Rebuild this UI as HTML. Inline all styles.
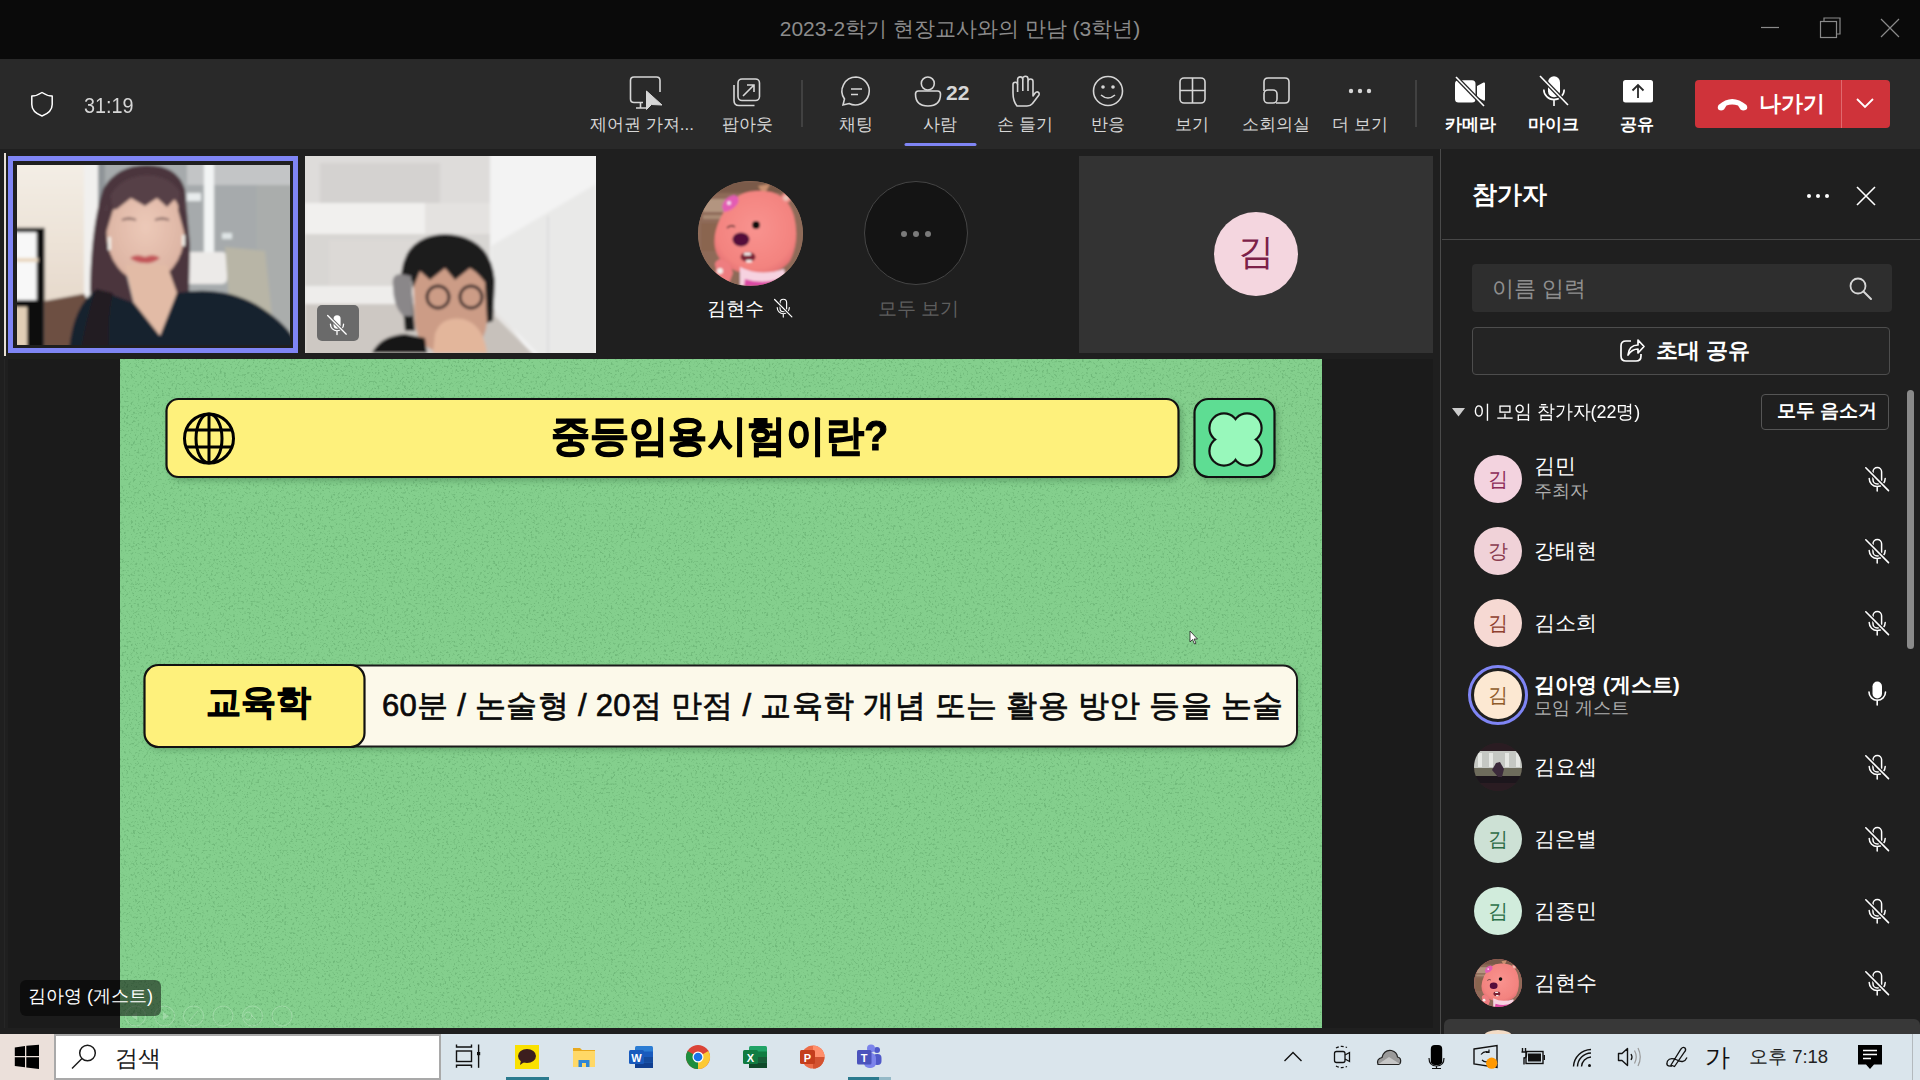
<!DOCTYPE html>
<html><head><meta charset="utf-8">
<style>
*{margin:0;padding:0;box-sizing:border-box}
html,body{width:1920px;height:1080px;overflow:hidden;background:#1f1f1f;font-family:"Liberation Sans",sans-serif;color:#fff}
.a{position:absolute}
svg{position:absolute;overflow:visible}
.lbl{position:absolute;top:114px;font-size:17px;color:#d6d6d6;white-space:nowrap;transform:translateX(-50%);line-height:22px}
.nm{position:absolute;font-size:21px;color:#fff;white-space:nowrap;line-height:26px}
.av{position:absolute;width:48px;height:48px;border-radius:50%;text-align:center;line-height:48px;font-size:20px}
</style></head><body>
<svg style="left:0;top:0" width="0" height="0"><defs>
 <symbol id="mo" viewBox="0 0 25 26" overflow="visible">
  <g fill="none" stroke="#fff" stroke-width="1.5" stroke-linecap="round">
   <rect x="8" y="1.5" width="8.6" height="16.5" rx="4.3"/>
   <path d="M4.2 12.5 A8 8 0 0 0 20.2 12.5 M12.2 20.5 V25"/>
  </g>
  <path d="M0.8 1.8 L23.5 24.6" stroke="#1f1f1f" stroke-width="4"/>
  <path d="M0.8 1.8 L23.5 24.6" stroke="#fff" stroke-width="1.6" stroke-linecap="round"/>
 </symbol>
</defs></svg>
<!-- TITLE BAR -->
<div class="a" style="left:0;top:0;width:1920px;height:59px;background:#0a0a0a"></div>
<div class="a" style="left:0;top:0;width:1920px;height:59px;text-align:center;line-height:58px;font-size:21px;color:#8c8c8c">2023-2학기 현장교사와의 만남 (3학년)</div>
<svg style="left:0;top:0" width="1920" height="59">
 <line x1="1761" y1="27.5" x2="1779" y2="27.5" stroke="#8a8a8a" stroke-width="1.2"/>
 <rect x="1820.5" y="21.5" width="16" height="16" fill="none" stroke="#8a8a8a" stroke-width="1.2"/>
 <path d="M1824 21.5 V18 H1840 V34 H1837" fill="none" stroke="#8a8a8a" stroke-width="1.2"/>
 <path d="M1881 19 L1899 37 M1899 19 L1881 37" stroke="#8a8a8a" stroke-width="1.2"/>
</svg>
<!-- TOOLBAR -->
<div class="a" style="left:0;top:59px;width:1920px;height:90px;background:#292929"></div>
<svg style="left:0;top:59px" width="1920" height="90">
 <!-- shield -->
 <path d="M42 33.5 C39 35.5 35.5 37 31.8 37 V45.5 C31.8 50.5 35.5 54.5 42 57 C48.5 54.5 52.2 50.5 52.2 45.5 V37 C48.5 37 45 35.5 42 33.5Z" fill="none" stroke="#fff" stroke-width="1.5" stroke-linejoin="round"/>
 <!-- control: monitor + cursor -->
 <g fill="none" stroke="#d6d6d6" stroke-width="1.6" transform="translate(0,2)">
  <path d="M643 41.5 H634 Q630.5 41.5 630.5 38 V19.5 Q630.5 16 634 16 H656.5 Q660 16 660 19.5 V31"/>
  <path d="M636 47 H646 M640.5 41.5 V47"/>
 </g>
 <path d="M646.5 32 L646.5 50.5 L651.5 45.5 L662 46Z" fill="#d6d6d6" stroke="#d6d6d6" stroke-width="1" stroke-linejoin="round"/>
 <!-- popout -->
 <g fill="none" stroke="#d6d6d6" stroke-width="1.6" transform="translate(0,1.5)">
  <rect x="738" y="18.5" width="21.5" height="21.5" rx="4"/>
  <path d="M734 24.5 V40 Q734 45 739 45 H754.5"/>
  <path d="M743 35.5 L754 24.5 M747 24.5 H754 V31.5"/>
 </g>
 <line x1="802" y1="21" x2="802" y2="68" stroke="#4a4a4a" stroke-width="1.5"/>
 <!-- chat -->
 <g fill="none" stroke="#d6d6d6" stroke-width="1.6">
  <path d="M856 18 A14 14 0 1 1 849 44.5 L843 46 L844.5 40 A14 14 0 0 1 856 18Z"/>
  <path d="M851 30 H862 M851 35.5 H858"/>
 </g>
 <!-- people -->
 <g fill="none" stroke="#d6d6d6" stroke-width="1.6">
  <circle cx="927.8" cy="24.5" r="6.5"/>
  <path d="M915.5 35 Q915.5 32 918.5 32 H937.5 Q940.5 32 940.5 35 Q940.5 47 928 47 Q915.5 47 915.5 35Z"/>
 </g>
 <line x1="906" y1="85.5" x2="975" y2="85.5" stroke="#7f85f5" stroke-width="3" stroke-linecap="round"/>
 <!-- hand -->
 <g fill="none" stroke="#d6d6d6" stroke-width="1.6" stroke-linejoin="round" transform="translate(0,-59)">
  <path d="M1017 106 Q1013 101 1013 93 V84.5 A2.3 2.3 0 0 1 1017.6 84.5 V79.5 A2.6 2.6 0 0 1 1022.8 79.5 V78.8 A2.6 2.6 0 0 1 1028 78.8 V81.5 A2.5 2.5 0 0 1 1033 81.5 V96 L1035.3 92.8 A2.1 2.1 0 0 1 1038.8 95.2 L1032.5 103.5 Q1030.5 106 1027 106 Z"/>
  <path d="M1017.6 84.5 V92 M1022.8 79.5 V91 M1028 81.5 V91"/>
 </g>
 <!-- smiley -->
 <g fill="none" stroke="#d6d6d6" stroke-width="1.6">
  <circle cx="1108" cy="32" r="14.5"/>
  <path d="M1101 36 Q1108 42 1115 36"/>
 </g>
 <circle cx="1103" cy="28" r="1.8" fill="#d6d6d6"/><circle cx="1113" cy="28" r="1.8" fill="#d6d6d6"/>
 <!-- grid -->
 <g fill="none" stroke="#d6d6d6" stroke-width="1.6">
  <rect x="1180" y="19" width="25" height="25" rx="4"/>
  <path d="M1192.5 19 V44 M1180 31.5 H1205"/>
 </g>
 <!-- breakout -->
 <g fill="none" stroke="#d6d6d6" stroke-width="1.6">
  <path d="M1264 32 V23 Q1264 19 1268 19 H1285 Q1289 19 1289 23 V40 Q1289 44 1285 44 H1276"/>
  <rect x="1264" y="31" width="13" height="13" rx="4"/>
 </g>
 <!-- more -->
 <circle cx="1351" cy="32" r="2.2" fill="#d6d6d6"/><circle cx="1360" cy="32" r="2.2" fill="#d6d6d6"/><circle cx="1369" cy="32" r="2.2" fill="#d6d6d6"/>
 <line x1="1416" y1="21" x2="1416" y2="68" stroke="#4a4a4a" stroke-width="1.5"/>
 <!-- camera off -->
 <path d="M1458.5 21.3 H1472 Q1475.5 21.3 1475.5 24.8 V40 Q1475.5 43.5 1472 43.5 H1458.5 Q1455 43.5 1455 40 V24.8 Q1455 21.3 1458.5 21.3Z M1477 27 L1483.5 23.5 Q1485 23 1485 24.5 V40.5 Q1485 42 1483.5 41.5 L1477 38Z" fill="#fff"/>
 <path d="M1456 18 L1484 47" stroke="#292929" stroke-width="4"/>
 <path d="M1456 18 L1484 47" stroke="#fff" stroke-width="1.6"/>
 <!-- mic off -->
 <rect x="1548" y="17.3" width="12" height="21" rx="6" fill="#fff"/>
 <path d="M1543.8 30.5 A10.2 10.2 0 0 0 1564.2 30.5 M1554 41 V47" fill="none" stroke="#fff" stroke-width="1.6"/>
 <path d="M1540 17 L1568 46" stroke="#292929" stroke-width="4"/>
 <path d="M1540 17 L1568 46" stroke="#fff" stroke-width="1.6"/>
 <!-- share -->
 <rect x="1623" y="21" width="30" height="22.5" rx="2.5" fill="#fff"/>
 <path d="M1638 39 V27 M1632.5 31.5 L1638 26 L1643.5 31.5" fill="none" stroke="#292929" stroke-width="1.8"/>
</svg>
<div class="lbl" style="left:642px">제어권 가져...</div>
<div class="lbl" style="left:747px">팝아웃</div>
<div class="lbl" style="left:856px">채팅</div>
<div class="lbl" style="left:940px">사람</div>
<div class="a" style="left:946px;top:81px;font-size:21px;font-weight:bold;color:#d6d6d6;line-height:24px">22</div>
<div class="lbl" style="left:1025px">손 들기</div>
<div class="lbl" style="left:1108px">반응</div>
<div class="lbl" style="left:1192px">보기</div>
<div class="lbl" style="left:1276px">소회의실</div>
<div class="lbl" style="left:1360px">더 보기</div>
<div class="lbl" style="left:1470px;color:#fff;font-weight:bold">카메라</div>
<div class="lbl" style="left:1553px;color:#fff;font-weight:bold">마이크</div>
<div class="lbl" style="left:1637px;color:#fff;font-weight:bold">공유</div>
<div class="a" style="left:84px;top:94px;font-size:22.5px;color:#d6d6d6;line-height:24px;transform:scaleX(0.88);transform-origin:0 0">31:19</div>
<!-- leave -->
<div class="a" style="left:1695px;top:80px;width:195px;height:48px;background:#cf333a;border-radius:4px"></div>
<div class="a" style="left:1841px;top:80px;width:1px;height:48px;background:#e06a6e"></div>
<svg style="left:1695px;top:80px" width="195" height="48">
 <path d="M23.5 25 Q37 13 51.5 25 Q53 27.5 52 29 L50.5 30 Q48 31 45.5 29.5 L43 25.5 Q37 23.5 31.5 25.5 L29 29.5 Q26.5 31 24 30 L23 29 Q22 27.5 23.5 25Z" fill="#fff"/>
 <path d="M162 19 L170 27 L178 19" fill="none" stroke="#fff" stroke-width="1.8"/>
</svg>
<div class="a" style="left:1759px;top:90px;font-size:22px;font-weight:bold;line-height:28px">나가기</div>

<!-- MAIN -->
<div class="a" style="left:4px;top:153px;width:1.5px;height:203px;background:#e8e0d6"></div>
<div class="a" style="left:8px;top:156px;width:290px;height:197px;border:5px solid #7f85f5;background:#1f1f1f"></div>
<div class="a" id="v1" style="left:17px;top:165px;width:273px;height:180px;overflow:hidden;background:#cfc9c0">
<svg style="left:0;top:0" width="273" height="180">
 <defs><filter id="b1" x="-10%" y="-10%" width="120%" height="120%"><feGaussianBlur stdDeviation="1.5"/></filter>
 <linearGradient id="g1w" x1="0" y1="0" x2="0" y2="1"><stop offset="0" stop-color="#f4eee6"/><stop offset="1" stop-color="#e2d3c3"/></linearGradient>
 <radialGradient id="g1f" cx="0.5" cy="0.45" r="0.55"><stop offset="0" stop-color="#ecc9b8"/><stop offset="1" stop-color="#dcb3a2"/></radialGradient></defs>
 <g filter="url(#b1)">
 <rect x="-5" y="-5" width="90" height="190" fill="url(#g1w)"/>
 <rect x="67" y="-5" width="14" height="190" fill="#f1f0ee"/>
 <rect x="81" y="-5" width="200" height="190" fill="#a6aaac"/>
 <rect x="81" y="-5" width="7" height="190" fill="#8f9498"/>
 <rect x="170" y="-5" width="110" height="25" fill="#c3c5c6"/>
 <rect x="187" y="-5" width="10" height="95" fill="#f2f4f4"/>
 <rect x="170" y="28" width="14" height="8" fill="#e8eced"/>
 <rect x="205" y="68" width="10" height="6" fill="#dfe5e6"/>
 <rect x="240" y="20" width="40" height="165" fill="#aaadac"/>
 <rect x="166" y="87" width="44" height="32" rx="5" fill="#eceae8"/>
 <path d="M208 82 L248 86 L256 162 L214 166Z" fill="#b8b5a6"/>
 <rect x="-5" y="62.8" width="32.6" height="120" fill="#101010"/>
 <rect x="-5" y="67.2" width="24.7" height="68" fill="#f8f8f8"/>
 <rect x="-5" y="93" width="26" height="4" fill="#e9d7bf"/>
 <rect x="-5" y="142" width="15" height="40" fill="#e2cfb5"/>
 <path d="M27.6 136 L67 128.8 L70 134 V185 H27.6Z" fill="#6d4f42"/>
 <path d="M82 178 L73 125 Q74 60 86 24 Q100 0 130 0 Q160 0 168 24 L173 80 L172 127 L158 132 L150 104 L108 104 L117 140 L97 178Z" fill="#4b363d"/>
 <ellipse cx="128.5" cy="67" rx="39" ry="50" fill="url(#g1f)"/>
 <path d="M108 100 L150 100 L160 128 L143 171 L117 138Z" fill="#e2bba6"/>
 <path d="M88 46 Q95 12 130 10 Q165 12 169 46 L163 44 L158 34 L150 42 L140 33 L128 41 L114 33 L100 44Z" fill="#574047"/>
 <path d="M92 20 L87 75 L96 45Z M164 20 L170 78 L161 45Z" fill="#4b363d"/>
 <path d="M128 92 Q137 88 143 93 Q136 99 128 98 Q119 98 113 93 Q119 88 128 92Z" fill="#c25459"/>
 <path d="M105 55 Q112 52 119 55 M138 55 Q145 52 152 55" stroke="#6a4d4d" stroke-width="1.8" fill="none"/>
 <path d="M52 185 Q56 140 80 124 L117 138 L143 171 L160 128 Q205 120 240 140 Q266 156 276 172 V185Z" fill="#17222d"/>
 <path d="M79 124 Q70 150 64 185 H92 Q90 150 96 128Z" fill="#221b20"/>
 <rect x="91" y="72" width="3" height="13" fill="#f2efe8"/>
 <rect x="165" y="70" width="3" height="11" fill="#f2efe8"/>
 </g>
</svg></div>
<div class="a" id="v2" style="left:305px;top:156px;width:291px;height:197px;overflow:hidden;background:#e3e1de">
<svg style="left:0;top:0" width="291" height="197">
 <defs><filter id="b2" x="-10%" y="-10%" width="120%" height="120%"><feGaussianBlur stdDeviation="1.4"/></filter></defs>
 <g filter="url(#b2)">
 <rect x="-5" y="-5" width="300" height="210" fill="#e6e4e2"/>
 <rect x="-5" y="-5" width="190" height="52" fill="#dedcda"/>
 <rect x="15" y="7" width="120" height="40" fill="#d4d2d0"/>
 <path d="M0 47 H192 V78 H0Z" fill="#f1f0ee"/>
 <path d="M120 47 H192 V78 H120Z" fill="#e4e2e0"/>
 <rect x="0" y="78" width="190" height="58" fill="#d8d6d3"/>
 <rect x="24" y="84" width="90" height="52" fill="#dcd9d6"/>
 <rect x="0" y="130" width="110" height="25" fill="#eeedeb"/>
 <rect x="0" y="148" width="190" height="55" fill="#cdc8c3"/>
 <path d="M185 -5 H296 V205 H230 L185 140Z" fill="#f3f3f3"/>
 <path d="M186 90 L291 28 V205 H240 L186 150Z" fill="#e9e9e8"/>
 <path d="M180 150 L235 205 H175Z" fill="#c7c1bb"/>
 <rect x="242" y="60" width="2" height="140" fill="#dddddd"/>
 <path d="M96 130 Q94 80 140 78 Q186 80 190 125 L188 165 L178 168 L176 125 L106 125 L110 175 L100 175Z" fill="#1d1a1b"/>
 <path d="M108 125 Q110 100 145 100 Q178 100 180 125 L182 165 Q180 197 145 197 Q112 197 110 165Z" fill="#cc9c86"/>
 <path d="M104 100 Q140 84 182 100 L184 132 Q175 118 165 112 L150 124 L140 112 L125 124 L115 115 L108 132Z" fill="#1d1a1b"/>
 <path d="M88 130 Q86 118 96 118 L106 120 L108 160 L98 160 Q88 150 88 130Z" fill="#8a8789"/>
 <g fill="none" stroke="#3a2b2b" stroke-width="3"><circle cx="133" cy="141" r="11"/><circle cx="166" cy="141" r="11"/></g>
 <path d="M130 178 Q136 160 158 163 Q178 168 182 197 H128Z" fill="#e3b69b"/>
 <path d="M67 197 Q75 180 100 178 L120 182 L122 197Z" fill="#141414"/>
 </g>
 <rect x="12" y="149" width="42" height="36" rx="5" fill="#6a6a6a"/>
 <g transform="translate(22,158) scale(0.82)">
  <g fill="none" stroke="#fff" stroke-width="1.6" stroke-linecap="round"><path d="M4.2 12.5 A8 8 0 0 0 20.2 12.5 M12.2 20.5 V25"/></g>
  <rect x="8" y="1.5" width="8.6" height="16.5" rx="4.3" fill="#fff"/>
  <path d="M0.8 1.8 L23.5 24.6" stroke="#6a6a6a" stroke-width="4"/>
  <path d="M0.8 1.8 L23.5 24.6" stroke="#fff" stroke-width="1.6" stroke-linecap="round"/>
 </g>
</svg></div>

<div class="a" id="loopy" style="left:698px;top:181px;width:105px;height:105px;border-radius:50%;overflow:hidden;background:#9b7560">
<svg style="left:0;top:0" width="105" height="105">
 <defs><filter id="b3"><feGaussianBlur stdDeviation="0.9"/></filter>
 <radialGradient id="lg" cx="0.5" cy="0.45" r="0.6"><stop offset="0" stop-color="#f9938f"/><stop offset="0.8" stop-color="#f3837f"/><stop offset="1" stop-color="#e26f72"/></radialGradient></defs>
 <g filter="url(#b3)">
 <rect width="105" height="105" fill="#8e6b58"/>
 <rect x="0" y="0" width="105" height="12" fill="#7a5a48"/>
 <rect x="5" y="18" width="30" height="13" fill="#b39580"/>
 <rect x="5" y="34" width="22" height="4" fill="#a98a75"/>
 <rect x="3" y="42" width="22" height="28" fill="#8a6550"/>
 <path d="M60 5 L72 3 L66 14Z" fill="#c89070"/>
 <path d="M58 10 Q88 8 96 35 Q102 60 92 80 Q80 95 55 93 Q30 92 20 75 Q12 60 22 38 Q35 10 58 10Z" fill="url(#lg)"/>
 <circle cx="88" cy="17" r="5" fill="#f08a86"/><circle cx="88" cy="17" r="2.8" fill="#e9c2b6"/>
 <path d="M18 88 Q15 80 22 78 Q32 80 35 92 L30 105 H15Z" fill="#ee7d80"/>
 <circle cx="22" cy="90" r="3" fill="#f3ecea"/>
 <path d="M24 26 Q26 16 36 14 Q42 15 40 22 Q36 29 26 31Z" fill="#e35bb4"/>
 <circle cx="31" cy="22" r="2" fill="#f7e1f0"/>
 <path d="M42 86 Q62 96 86 88 L90 105 H42Z" fill="#f6d2e0"/>
 <path d="M47 98 Q65 104 84 97 L86 105 H46Z" fill="#dc4aa5"/>
 <circle cx="58" cy="44" r="3.9" fill="#0c0c0c"/>
 <path d="M29 47 Q33 43 37 46" stroke="#4a2a2a" stroke-width="1.5" fill="none"/>
 <ellipse cx="43" cy="58.5" rx="8.5" ry="7" fill="#55083a"/>
 <ellipse cx="50" cy="76" rx="7.5" ry="5" fill="#7a2234"/>
 <rect x="46" y="71.5" width="7" height="3" rx="1" fill="#f5f0ee"/>
 <rect x="48" y="79" width="6" height="2.5" rx="1" fill="#f5f0ee"/>
 </g>
</svg></div>
<div class="nm" style="left:707px;top:296px;font-size:18.5px">김현수</div>
<div class="a" style="left:864px;top:181px;width:104px;height:104px;border-radius:50%;background:#141414;border:1px solid #454545"></div>
<svg style="left:0;top:0" width="1" height="1">
 <circle cx="904" cy="234" r="3" fill="#7a7a7a"/><circle cx="916" cy="234" r="3" fill="#7a7a7a"/><circle cx="928" cy="234" r="3" fill="#7a7a7a"/>
</svg>
<div class="nm" style="left:878px;top:296px;font-size:18.5px;color:#5e5e5e">모두 보기</div>

<div class="a" style="left:1079px;top:156px;width:354px;height:197px;background:#333333"></div>
<div class="a" style="left:1214px;top:212px;width:84px;height:84px;border-radius:50%;background:#f4d6df;color:#7c2148;text-align:center;line-height:79px;font-size:36px">김</div>

<div class="a" style="left:8px;top:359px;width:1425px;height:669px;background:#1b1b1b"></div>
<div class="a" style="left:4px;top:359px;width:1px;height:669px;background:#262626"></div>
<!-- SLIDE -->
<div class="a" id="slide" style="left:120px;top:359px;width:1202px;height:669px;background:#84cf8d;overflow:hidden">
 <svg style="left:0;top:0" width="1202" height="669">
  <defs>
   <filter id="nz" x="0" y="0" width="100%" height="100%" color-interpolation-filters="sRGB"><feTurbulence type="fractalNoise" baseFrequency="0.45" numOctaves="3" seed="7"/><feColorMatrix values="0 0 0 0 0.38  0 0 0 0 0.66  0 0 0 0 0.42  5 0 0 0 -2.75"/></filter>
   <filter id="sh" x="-5%" y="-20%" width="110%" height="150%"><feGaussianBlur stdDeviation="3"/></filter>
  </defs>
  <rect width="1202" height="669" filter="url(#nz)" opacity="0.55"/>
  <!-- shadows -->
  <rect x="49" y="42" width="1013" height="80" rx="13" fill="#3f7a4c" opacity="0.45" filter="url(#sh)"/>
  <rect x="1077" y="42" width="81" height="80" rx="14" fill="#3f7a4c" opacity="0.45" filter="url(#sh)"/>
  <rect x="27" y="309" width="1152" height="82" rx="14" fill="#3f7a4c" opacity="0.45" filter="url(#sh)"/>
  <!-- title bar -->
  <rect x="46.5" y="40" width="1012" height="78" rx="12" fill="#fef17c" stroke="#111" stroke-width="2.2"/>
  <g fill="none" stroke="#000" stroke-width="3">
   <circle cx="89" cy="79.5" r="24.5"/>
   <ellipse cx="89" cy="79.5" rx="13" ry="24.5"/>
   <path d="M89 55 V104 M65.5 71 H112.5 M65.5 88 H112.5"/>
  </g>
  <!-- clover box -->
  <rect x="1074.5" y="40" width="80" height="78" rx="14" fill="#5edd93" stroke="#111" stroke-width="2.2"/>
  <g stroke="#111" stroke-width="4.4" fill="#98f8bb"><circle cx="1104" cy="69" r="13.5"/><circle cx="1127" cy="69" r="13.5"/><circle cx="1104" cy="92" r="13.5"/><circle cx="1127" cy="92" r="13.5"/></g>
  <g fill="#98f8bb"><circle cx="1104" cy="69" r="13.5"/><circle cx="1127" cy="69" r="13.5"/><circle cx="1104" cy="92" r="13.5"/><circle cx="1127" cy="92" r="13.5"/><rect x="1104" y="69" width="23" height="23"/></g>
  <!-- row -->
  <rect x="175" y="306.5" width="1002" height="81" rx="14" fill="#fcf9ea" stroke="#1a1a1a" stroke-width="2"/>
  <rect x="24.5" y="306" width="220" height="82" rx="14" fill="#fef17c" stroke="#111" stroke-width="2.2"/>
 </svg>
 <div class="a" style="left:431px;top:49px;font-size:42px;font-weight:bold;color:#000;-webkit-text-stroke:1.1px #000;line-height:56px;white-space:nowrap;transform:scaleX(0.932);transform-origin:0 0">중등임용시험이란?</div>
 <div class="a" style="left:86px;top:315px;font-size:35px;font-weight:bold;color:#000;-webkit-text-stroke:0.9px #000;line-height:56px;white-space:nowrap">교육학</div>
 <div class="a" style="left:262px;top:322px;font-size:31px;font-weight:normal;-webkit-text-stroke:0.7px #0a0a0a;color:#0a0a0a;line-height:50px;white-space:nowrap;letter-spacing:0.3px">60분 / 논술형 / 20점 만점 / 교육학 개념 또는 활용 방안 등을 논술</div>
</div>

<!-- tooltip & slide controls -->
<svg style="left:0;top:0" width="1920" height="1080">
 <g fill="none" stroke="#fff" stroke-opacity="0.22" stroke-width="1">
  <circle cx="135.5" cy="1016" r="10"/><circle cx="164.5" cy="1016" r="10"/><circle cx="193.5" cy="1016" r="10"/><circle cx="223" cy="1016" r="10"/><circle cx="252.5" cy="1016" r="10"/><circle cx="282" cy="1016" r="10"/>
  <path d="M189 1021 L198 1011 M248 1012 A4 4 0 1 0 248.1 1012 M251 1015 L256 1020"/>
 </g>
 <path d="M137 1012 L131 1016 L137 1020Z M163 1012 L169 1016 L163 1020Z" fill="#fff" fill-opacity="0.22"/>
 <!-- cursor -->
 <path d="M1190 631 V642 L1192.5 639.5 L1194.5 644 L1196 643.3 L1194 639 H1197.5Z" fill="#fff" stroke="#222" stroke-width="0.8"/>
 <!-- name mic-off in tile -->
 <use href="#mo" x="774" y="298" width="19" height="20"/>
</svg>
<div class="a" style="left:20px;top:980px;width:141px;height:36px;border-radius:6px;background:rgba(0,0,0,0.5)"></div>
<div class="a" style="left:28px;top:983px;font-size:18px;line-height:26px;color:#fff;white-space:nowrap">김아영 (게스트)</div>
<!-- RIGHT PANEL -->
<div class="a" style="left:1440px;top:149px;width:1px;height:885px;background:#4a4a4a"></div>
<div class="a" style="left:1472px;top:178px;font-size:25px;font-weight:bold;line-height:32px">참가자</div>
<svg style="left:0;top:0" width="1" height="1">
 <circle cx="1809" cy="196" r="2" fill="#fff"/><circle cx="1818" cy="196" r="2" fill="#fff"/><circle cx="1827" cy="196" r="2" fill="#fff"/>
 <path d="M1857 187 L1875 205 M1875 187 L1857 205" stroke="#fff" stroke-width="1.6"/>
</svg>
<div class="a" style="left:1442px;top:239px;width:478px;height:1px;background:#474747"></div>
<div class="a" style="left:1472px;top:264px;width:420px;height:48px;background:#2e2e2e;border-radius:4px"></div>
<div class="a" style="left:1492px;top:275px;font-size:21.5px;color:#8f8f8f;line-height:28px">이름 입력</div>
<svg style="left:0;top:0" width="1" height="1">
 <circle cx="1858" cy="286" r="7.5" fill="none" stroke="#d6d6d6" stroke-width="1.8"/>
 <path d="M1863.5 291.5 L1871 299" stroke="#d6d6d6" stroke-width="2" stroke-linecap="round"/>
</svg>
<div class="a" style="left:1472px;top:327px;width:418px;height:48px;background:#242424;border:1px solid #4d4d4d;border-radius:4px"></div>
<svg style="left:0;top:0" width="1" height="1">
 <path d="M1631 341 H1626 Q1621 341 1621 346 V356 Q1621 361 1626 361 H1636 Q1641 361 1641 356 V354" fill="none" stroke="#fff" stroke-width="1.7"/>
 <path d="M1628 355 Q1629 345 1638 345 V340 L1644 346.5 L1638 353 V349 Q1632 349 1628 355Z" fill="none" stroke="#fff" stroke-width="1.7" stroke-linejoin="round"/>
</svg>
<div class="a" style="left:1656px;top:337px;font-size:21.5px;font-weight:bold;line-height:28px">초대 공유</div>
<svg style="left:0;top:0" width="1" height="1"><path d="M1452 408 H1465 L1458.5 416.5Z" fill="#ccc"/></svg>
<div class="a" style="left:1473px;top:400px;font-size:19px;line-height:24px;color:#fff;transform:scaleX(0.943);transform-origin:0 0">이 모임 참가자(22명)</div>
<div class="a" style="left:1761px;top:394px;width:128px;height:36px;border:1px solid #555;border-radius:4px;background:#1f1f1f"></div>
<div class="a" style="left:1777px;top:399px;font-size:19px;font-weight:bold;line-height:24px">모두 음소거</div>
<div class="a" style="left:1907px;top:390px;width:7px;height:259px;background:#8a8a8a;border-radius:4px"></div>
<!-- rows -->
<div class="av" style="left:1474px;top:455px;background:#f3d3df;color:#8c2b58">김</div>
<div class="nm" style="left:1534px;top:453px">김민</div>
<div class="nm" style="left:1534px;top:480px;font-size:18px;color:#adadad;line-height:22px">주최자</div>
<div class="av" style="left:1474px;top:527px;background:#f0d2d8;color:#8a3b4f">강</div>
<div class="nm" style="left:1534px;top:538px">강태현</div>
<div class="av" style="left:1474px;top:599px;background:#f6d9d3;color:#8e3f2f">김</div>
<div class="nm" style="left:1534px;top:610px">김소희</div>
<div class="a" style="left:1468px;top:665px;width:60px;height:60px;border-radius:50%;border:3px solid #7f85f5"></div>
<div class="av" style="left:1474px;top:671px;background:#fce8d2;color:#8e5b2a">김</div>
<div class="nm" style="left:1534px;top:672px;font-weight:bold">김아영 (게스트)</div>
<div class="nm" style="left:1534px;top:697px;font-size:18px;color:#adadad;line-height:22px">모임 게스트</div>
<div class="av" id="yosep" style="left:1474px;top:743px;background:#2a1f22;overflow:hidden"><svg style="left:0;top:0" width="48" height="48"><defs><filter id="b4"><feGaussianBlur stdDeviation="0.6"/></filter></defs><g filter="url(#b4)">
<rect x="0" y="0" width="48" height="48" fill="#2a1f22"/>
<rect x="0" y="8" width="48" height="17" fill="#c5c8c3"/>
<rect x="4" y="10" width="4" height="14" fill="#e6e8e4"/><rect x="15" y="10" width="4" height="14" fill="#e6e8e4"/><rect x="31" y="10" width="4" height="14" fill="#e6e8e4"/><rect x="42" y="10" width="4" height="14" fill="#e6e8e4"/>
<rect x="0" y="25" width="48" height="8" fill="#6e6c5c"/>
<rect x="0" y="33" width="48" height="7" fill="#1d151a"/>
<path d="M18 27 L22 20 L26 19 L30 26 L28 34 L24 34Z" fill="#3a2a3a"/>
</g></svg></div>
<div class="nm" style="left:1534px;top:754px">김요셉</div>
<div class="av" style="left:1474px;top:815px;background:#cde1d5;color:#2d6b45">김</div>
<div class="nm" style="left:1534px;top:826px">김은별</div>
<div class="av" style="left:1474px;top:887px;background:#d1ecdc;color:#2c7049">김</div>
<div class="nm" style="left:1534px;top:898px">김종민</div>
<div class="av" id="loopy2" style="left:1474px;top:959px;background:#e96b73;overflow:hidden"><svg style="left:0;top:0" width="48" height="48" viewBox="0 0 105 105">
 <defs><filter id="b3s"><feGaussianBlur stdDeviation="1.5"/></filter>
 <radialGradient id="lgs" cx="0.5" cy="0.45" r="0.6"><stop offset="0" stop-color="#f9938f"/><stop offset="0.8" stop-color="#f3837f"/><stop offset="1" stop-color="#e26f72"/></radialGradient></defs>
 <g filter="url(#b3s)">
 <rect width="105" height="105" fill="#8e6b58"/>
 <rect x="0" y="0" width="105" height="12" fill="#7a5a48"/>
 <rect x="5" y="18" width="30" height="13" fill="#b39580"/>
 <rect x="5" y="34" width="22" height="4" fill="#a98a75"/>
 <rect x="3" y="42" width="22" height="28" fill="#8a6550"/>
 <path d="M60 5 L72 3 L66 14Z" fill="#c89070"/>
 <path d="M58 10 Q88 8 96 35 Q102 60 92 80 Q80 95 55 93 Q30 92 20 75 Q12 60 22 38 Q35 10 58 10Z" fill="url(#lgs)"/>
 <circle cx="88" cy="17" r="5" fill="#f08a86"/><circle cx="88" cy="17" r="2.8" fill="#e9c2b6"/>
 <path d="M18 88 Q15 80 22 78 Q32 80 35 92 L30 105 H15Z" fill="#ee7d80"/>
 <circle cx="22" cy="90" r="3" fill="#f3ecea"/>
 <path d="M24 26 Q26 16 36 14 Q42 15 40 22 Q36 29 26 31Z" fill="#e35bb4"/>
 <circle cx="31" cy="22" r="2" fill="#f7e1f0"/>
 <path d="M42 86 Q62 96 86 88 L90 105 H42Z" fill="#f6d2e0"/>
 <path d="M47 98 Q65 104 84 97 L86 105 H46Z" fill="#dc4aa5"/>
 <circle cx="58" cy="44" r="3.9" fill="#0c0c0c"/>
 <path d="M29 47 Q33 43 37 46" stroke="#4a2a2a" stroke-width="1.5" fill="none"/>
 <ellipse cx="43" cy="58.5" rx="8.5" ry="7" fill="#55083a"/>
 <ellipse cx="50" cy="76" rx="7.5" ry="5" fill="#7a2234"/>
 <rect x="46" y="71.5" width="7" height="3" rx="1" fill="#f5f0ee"/>
 <rect x="48" y="79" width="6" height="2.5" rx="1" fill="#f5f0ee"/>
 </g>
</svg></div>
<div class="nm" style="left:1534px;top:970px">김현수</div>
<div class="a" style="left:1444px;top:1019px;width:476px;height:15px;background:#383838;border-radius:6px 6px 0 0"></div>
<div class="a" style="left:1484px;top:1030px;width:28px;height:12px;border-radius:50%;background:#f3dcc6;clip-path:inset(0 0 8px 0)"></div>

<svg style="left:0;top:0" width="1920" height="1080"><use href="#mo" x="1865" y="466" width="25" height="26"/><use href="#mo" x="1865" y="538" width="25" height="26"/><use href="#mo" x="1865" y="610" width="25" height="26"/><use href="#mo" x="1865" y="754" width="25" height="26"/><use href="#mo" x="1865" y="826" width="25" height="26"/><use href="#mo" x="1865" y="898" width="25" height="26"/><use href="#mo" x="1865" y="970" width="25" height="26"/>
 <rect x="1872.5" y="681.5" width="9.5" height="17" rx="4.75" fill="#fff"/>
 <path d="M1869 692 A8 8 0 0 0 1885.5 692 M1877.2 700 V705" fill="none" stroke="#fff" stroke-width="1.6" stroke-linecap="round"/>
</svg>
<!-- TASKBAR -->
<div class="a" style="left:0;top:1034px;width:1920px;height:46px;background:#dae5ec"></div>
<div class="a" style="left:0;top:1034px;width:54px;height:46px;background:#ebe0da"></div>
<div class="a" style="left:54px;top:1034px;width:387px;height:46px;background:#fff;border:2px solid #a9a9a9"></div>
<div class="a" style="left:1912px;top:1034px;width:1px;height:46px;background:#b3b9bd"></div>
<div class="a" style="left:115px;top:1043px;font-size:23px;color:#1a1a1a;line-height:30px">검색</div>
<div class="a" style="left:1705px;top:1042px;font-size:25px;color:#111;line-height:30px">가</div>
<div class="a" style="left:1749px;top:1045px;font-size:18.5px;color:#222;line-height:24px">오후 7:18</div>
<svg style="left:0;top:0" width="1920" height="1080">
 <!-- windows logo -->
 <path d="M14.8 1047.5 L25 1046 V1056 H14.8Z M26.3 1045.8 L39 1044.8 V1056 H26.3Z M14.8 1057.2 H25 V1067.3 L14.8 1066Z M26.3 1057.2 H39 V1069 L26.3 1067.6Z" fill="#000"/>
 <!-- search magnifier -->
 <circle cx="87.5" cy="1053" r="7.8" fill="none" stroke="#1a1a1a" stroke-width="1.5"/>
 <path d="M82 1058.5 L72 1068.5" stroke="#1a1a1a" stroke-width="1.5"/>
 <!-- task view -->
 <g fill="none" stroke="#111" stroke-width="1.4">
  <path d="M456.5 1044.5 V1047 H471.5 V1044.5 M456.5 1067.8 V1065.3 H471.5 V1067.8"/>
  <rect x="456.5" y="1051" width="15" height="10.5"/>
  <path d="M478.6 1044.5 V1067.8"/>
 </g>
 <rect x="477" y="1052" width="3.2" height="3.2" fill="#111"/>
 <!-- kakao -->
 <rect x="515" y="1045" width="24" height="24" fill="#fae100"/>
 <ellipse cx="527" cy="1056" rx="9" ry="7" fill="#3c1e1e"/>
 <path d="M521 1060 L520 1065 L525 1061.5Z" fill="#3c1e1e"/>
 <rect x="506" y="1077" width="43" height="3" fill="#2b7a8e"/>
 <!-- explorer -->
 <path d="M573 1048 H580 L582 1050 H595 V1067 H573Z" fill="#e8a91e"/>
 <rect x="573" y="1051" width="22" height="16" fill="#ffd866"/>
 <path d="M578.5 1067 V1060 H589.5 V1067 H586 V1063 H582 V1067Z" fill="#2f86d6"/>
 <!-- word -->
 <rect x="635" y="1046" width="18" height="22" rx="1.5" fill="#2b7cd3"/>
 <rect x="635" y="1051.5" width="18" height="5.5" fill="#185abd"/>
 <rect x="635" y="1057" width="18" height="5.5" fill="#144a9e"/>
 <rect x="635" y="1062.5" width="18" height="5.5" fill="#103f91"/>
 <rect x="629" y="1050" width="15" height="14" rx="1.5" fill="#185abd"/>
 <text x="636.5" y="1061.5" font-family="Liberation Sans" font-weight="bold" font-size="11" fill="#fff" text-anchor="middle">W</text>
 <!-- chrome -->
 <circle cx="698" cy="1057" r="12" fill="#db4437"/>
 <path d="M698 1057 L708.4 1051 A12 12 0 0 1 698 1069Z" fill="#fcc934"/>
 <path d="M698 1057 L698 1069 A12 12 0 0 1 687.6 1051Z" fill="#1e8e3e"/>
 <circle cx="698" cy="1057" r="5.5" fill="#fff"/>
 <circle cx="698" cy="1057" r="4.3" fill="#1a73e8"/>
 <!-- excel -->
 <rect x="749" y="1046" width="18" height="22" rx="1.5" fill="#21a366"/>
 <rect x="749" y="1051.5" width="18" height="5.5" fill="#107c41"/>
 <rect x="749" y="1057" width="18" height="5.5" fill="#185c37"/>
 <rect x="749" y="1062.5" width="18" height="5.5" fill="#0f4a2a"/>
 <rect x="743" y="1050" width="15" height="14" rx="1.5" fill="#107c41"/>
 <text x="750.5" y="1061.5" font-family="Liberation Sans" font-weight="bold" font-size="11" fill="#fff" text-anchor="middle">X</text>
 <!-- ppt -->
 <circle cx="813" cy="1057" r="11.5" fill="#ed6c47"/>
 <path d="M813 1045.5 A11.5 11.5 0 0 1 824.5 1057 H813Z" fill="#ff8f6b"/>
 <path d="M813 1057 H824.5 A11.5 11.5 0 0 1 813 1068.5Z" fill="#d35230"/>
 <rect x="800" y="1050" width="15" height="14" rx="1.5" fill="#c43e1c"/>
 <text x="807.5" y="1061.5" font-family="Liberation Sans" font-weight="bold" font-size="11" fill="#fff" text-anchor="middle">P</text>
 <!-- teams -->
 <circle cx="877" cy="1050" r="3" fill="#5059c9"/>
 <circle cx="871" cy="1048.5" r="4" fill="#7b83eb"/>
 <rect x="873" y="1054" width="8.5" height="11" rx="4" fill="#5059c9"/>
 <rect x="864" y="1053" width="12" height="15" rx="5" fill="#7b83eb"/>
 <rect x="857" y="1050" width="14.5" height="14.5" rx="1.5" fill="#4b53bc"/>
 <text x="864.2" y="1061.5" font-family="Liberation Sans" font-weight="bold" font-size="11" fill="#fff" text-anchor="middle">T</text>
 <rect x="848" y="1077" width="31" height="3" fill="#2b7a8e"/>
 <rect x="879" y="1077" width="12" height="3" fill="#94b9c7"/>
 <!-- tray -->
 <path d="M1284.5 1061 L1293 1052.5 L1301.5 1061" fill="none" stroke="#111" stroke-width="1.4"/>
 <g fill="none" stroke="#111" stroke-width="1.3">
  <rect x="1334.5" y="1051.5" width="10.5" height="11" rx="2"/>
  <path d="M1345 1055 L1349.5 1052.5 V1061.5 L1345 1059"/>
  <path d="M1336 1048 Q1341 1045 1347 1047.5 M1336 1066 Q1341 1069 1347 1066.5" stroke-dasharray="3 2"/>
 </g>
 <path d="M1378 1064.5 Q1376 1059 1382 1057.5 Q1384 1049.5 1391.5 1050.5 Q1397 1052 1397.5 1057 Q1401.5 1058 1400.5 1062.5 Q1400 1064.5 1397 1064.5Z" fill="#9a9a9a" stroke="#222" stroke-width="1.2"/>
 <path d="M1378.5 1064 L1389 1057 L1400 1064Z" fill="#c6c6c6"/>
 <rect x="1430.8" y="1045" width="11.4" height="20" rx="4" fill="#000"/>
 <path d="M1429 1058 Q1429 1066 1436.5 1066 Q1444 1066 1444 1058 M1436.5 1066 V1068.5 M1432 1068.5 H1441" fill="none" stroke="#111" stroke-width="1.2"/>
 <path d="M1474 1049 L1497 1045.5 V1067.5 L1474 1064Z" fill="none" stroke="#111" stroke-width="1.4"/>
 <path d="M1481 1054.5 Q1484 1050.5 1489 1052 M1489 1049.5 V1052.5 H1486 M1482 1060 Q1485 1063 1489 1061" fill="none" stroke="#111" stroke-width="1.2"/>
 <circle cx="1491.7" cy="1063.2" r="5.6" fill="#ff9800"/>
 <g fill="none" stroke="#111" stroke-width="1.4">
  <rect x="1526" y="1051.5" width="17" height="12"/>
  <path d="M1522.5 1048 V1052 M1525.5 1048 V1052 M1521.5 1052 H1526.5 V1055 Q1526.5 1058 1524 1058 V1064.5"/>
 </g>
 <rect x="1528" y="1053.5" width="13" height="8" fill="#111"/>
 <rect x="1543.5" y="1055" width="1.5" height="5" fill="#111"/>
 <g fill="none" stroke-width="1.4">
  <path d="M1573.5 1066.5 A18 18 0 0 1 1591 1049.5" stroke="#111"/>
  <path d="M1577.5 1066.5 A14 14 0 0 1 1591 1053" stroke="#111"/>
  <path d="M1581.5 1066.5 A10 10 0 0 1 1591 1057" stroke="#111"/>
 </g>
 <circle cx="1589.5" cy="1065.5" r="1.5" fill="#111"/>
 <path d="M1618.5 1053.5 H1622 L1627.5 1048.5 V1065.5 L1622 1060.5 H1618.5Z" fill="none" stroke="#111" stroke-width="1.4" stroke-linejoin="round"/>
 <path d="M1631 1054 Q1633 1057 1631 1060" fill="none" stroke="#111" stroke-width="1.3"/>
 <path d="M1634.5 1050.5 Q1638 1057 1634.5 1063.5 M1638 1048 Q1642.5 1057 1638 1066" fill="none" stroke="#999" stroke-width="1.2"/>
 <path d="M1671 1065 L1681 1049 Q1683 1046.5 1685 1048 Q1686.5 1050 1684.5 1052 L1674.5 1066.5Z M1672 1066 Q1665 1067 1667.5 1061 Q1670 1057 1677 1060 Q1684 1064 1687 1057.5" fill="none" stroke="#111" stroke-width="1.3"/>
 <path d="M1858 1045 H1882 V1064.5 H1874 L1870 1069 L1866 1064.5 H1858Z" fill="#000"/>
 <path d="M1863 1050.5 H1877 M1863 1054.5 H1877 M1863 1058.5 H1871" stroke="#fff" stroke-width="1.3"/>
</svg>
</body></html>
